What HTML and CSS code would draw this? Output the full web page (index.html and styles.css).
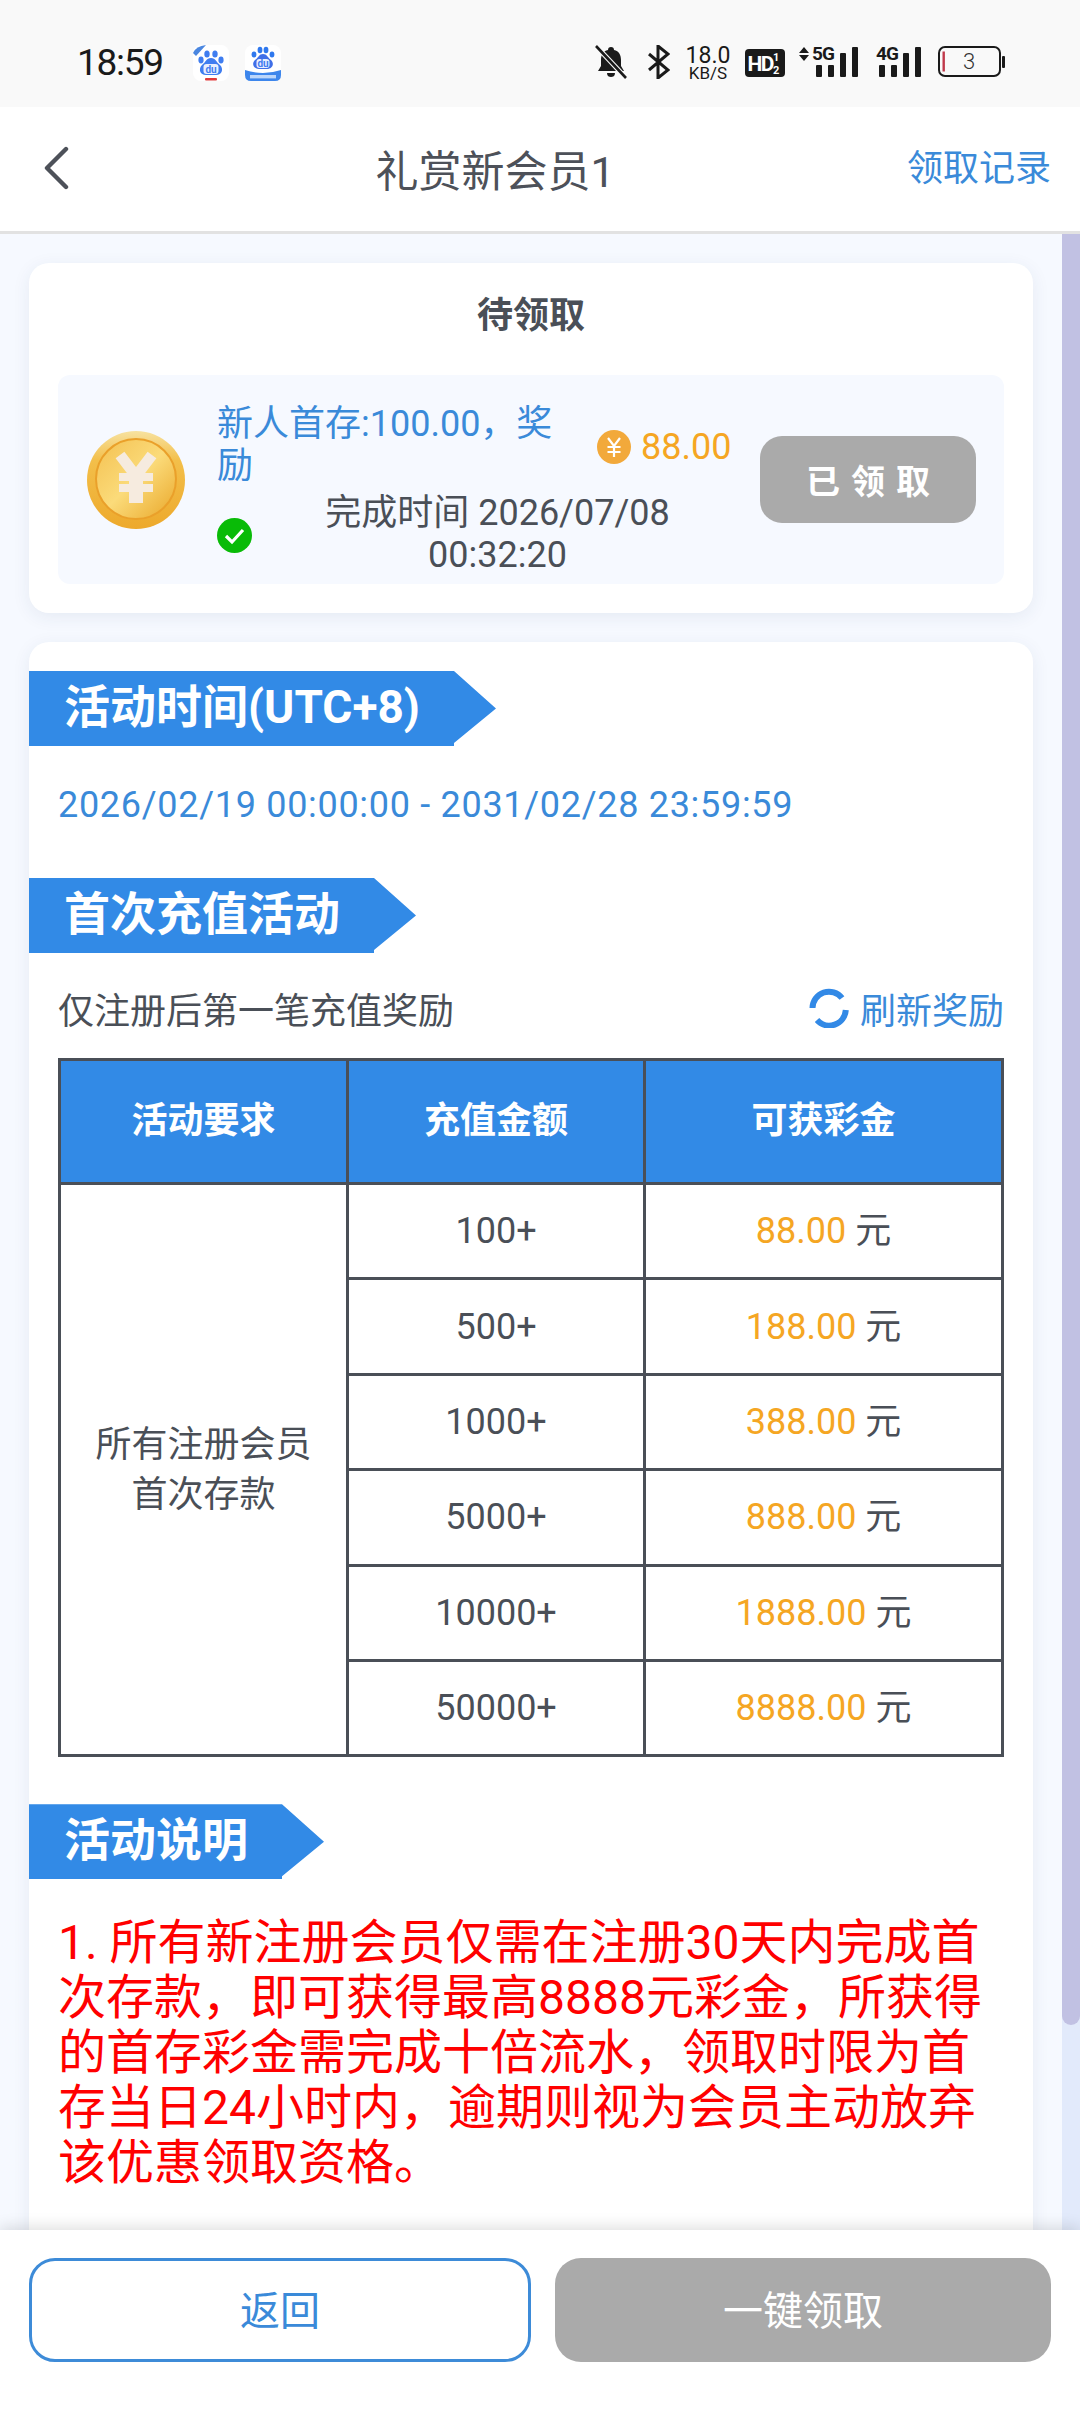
FILE: index.html
```html
<!DOCTYPE html>
<html lang="zh-CN">
<head>
<meta charset="utf-8">
<title>礼赏新会员1</title>
<link rel="stylesheet" href="styles.css">
</head>
<body>
<div class="app">
  <header class="status">
    <div class="status-left">
      <span class="clock">18:59</span>
      <svg class="app-ico" viewBox="0 0 36 36">
        <rect width="36" height="36" rx="8" fill="#fff"/>
        <path d="M0 8 Q3 1 13 0 L3 11Z" fill="#4a86e0"/>
        <ellipse cx="8" cy="15" rx="2.6" ry="3.4" fill="#3f7df0"/><ellipse cx="14" cy="9" rx="2.7" ry="3.6" fill="#3f7df0"/>
        <ellipse cx="22" cy="9" rx="2.7" ry="3.6" fill="#3f7df0"/><ellipse cx="28" cy="15" rx="2.6" ry="3.4" fill="#3f7df0"/>
        <path d="M18 13 C23 13 23 17 27 20 C31 24 29 30 23 30 L13 30 C7 30 5 24 9 20 C13 17 13 13 18 13Z" fill="#3f7df0"/>
        <rect x="10.500" y="19" width="15" height="10" rx="3" fill="#e8effd"/>
        <text x="18" y="27.500" class="du">du</text>
        <rect x="12" y="33" width="12" height="2.400" rx="1" fill="#e03a3a"/>
      </svg>
      <svg class="app-ico" viewBox="0 0 36 36">
        <rect width="36" height="36" rx="8" fill="#fff"/>
        <ellipse cx="9" cy="9.500" rx="2.400" ry="3" fill="#2f78ee"/><ellipse cx="15" cy="5" rx="2.400" ry="3.200" fill="#2f78ee"/>
        <ellipse cx="21" cy="5" rx="2.400" ry="3.200" fill="#2f78ee"/><ellipse cx="27" cy="9.500" rx="2.400" ry="3" fill="#2f78ee"/>
        <path d="M18 9 C22 9 22 12 26 15 C30 19 27 24 22 24 L14 24 C9 24 6 19 10 15 C14 12 14 9 18 9Z" fill="#3f6fe8"/>
        <rect x="11.500" y="14" width="13" height="9" rx="3" fill="#e8effd"/>
        <text x="18" y="21.500" class="du">du</text>
        <path d="M0 25 Q18 31 36 25 L36 30 Q36 36 30 36 L6 36 Q0 36 0 30Z" fill="#3d86ec"/>
        <rect x="5" y="30" width="26" height="3.400" fill="#bcd6fa"/>
      </svg>
    </div>
    <div class="status-right">
      <svg class="ico-bell" viewBox="0 0 32 34">
        <path d="M16 2 C18 2 19 3 19 5 C24 6 26 10 26 15 L26 21 L29 26 L3 26 L6 21 L6 15 C6 10 8 6 13 5 C13 3 14 2 16 2Z M12 28 L20 28 C20 31 18 32 16 32 C14 32 12 31 12 28Z" fill="#1a1a1a"/>
        <path d="M1 1 L31 33" stroke="#f9f9f9" stroke-width="5"/>
        <path d="M1 1 L31 33" stroke="#1a1a1a" stroke-width="2.600"/>
      </svg>
      <svg class="ico-bt" viewBox="0 0 22 34">
        <path d="M1 9 L20 25 L10 33 L10 1 L20 9 L1 25" fill="none" stroke="#1a1a1a" stroke-width="3"/>
      </svg>
      <div class="speed"><span class="speed-num">18.0</span><span class="speed-unit">KB/S</span></div>
      <svg class="ico-hd" viewBox="0 0 40 28">
        <rect width="40" height="28" rx="4" fill="#1a1a1a"/>
        <text x="2.500" y="21.500" class="hd-txt">HD</text>
        <text x="28" y="12" class="hd-sub">1</text>
        <text x="28" y="25" class="hd-sub">2</text>
      </svg>
      <svg class="ico-sig" viewBox="0 -6 60 40">
        <path d="M5 2 L10 8 L0 8Z M5 16 L10 10 L0 10Z" fill="#1a1a1a"/>
        <text x="13" y="15" class="sig-txt">5G</text>
        <rect x="17" y="20" width="6" height="12" rx="1" fill="#1a1a1a"/><rect x="29" y="20" width="6" height="12" rx="1" fill="#1a1a1a"/>
        <rect x="41" y="8" width="6" height="24" rx="1" fill="#1a1a1a"/><rect x="53" y="2" width="6" height="30" rx="1" fill="#1a1a1a"/>
      </svg>
      <svg class="ico-sig4" viewBox="0 -6 46 40">
        <text x="0" y="15" class="sig-txt">4G</text>
        <rect x="3" y="20" width="6" height="12" rx="1" fill="#1a1a1a"/><rect x="15" y="20" width="6" height="12" rx="1" fill="#1a1a1a"/>
        <rect x="27" y="8" width="6" height="24" rx="1" fill="#1a1a1a"/><rect x="39" y="2" width="6" height="30" rx="1" fill="#1a1a1a"/>
      </svg>
      <svg class="ico-bat" viewBox="0 0 67 32">
        <rect x="1" y="1" width="61" height="29" rx="6" fill="none" stroke="#1a1a1a" stroke-width="2"/>
        <rect x="4.500" y="5.500" width="2.400" height="20" fill="#c0394b"/>
        <rect x="64" y="10" width="3" height="12" rx="1" fill="#1a1a1a"/>
        <text x="31" y="23" class="bat-txt">3</text>
      </svg>
    </div>
  </header>

  <nav class="nav">
    <svg class="back" viewBox="0 0 26 44"><path d="M23 3 L4 22 L23 41" fill="none" stroke="#4d5159" stroke-width="4.400" stroke-linecap="round" stroke-linejoin="round"/></svg>
    <h1 class="nav-title">礼赏新会员1</h1>
    <a class="nav-link">领取记录</a>
  </nav>

  <div class="body">
    <main class="scroll">
      <section class="card card-pending">
        <h2 class="pending-title">待领取</h2>
        <div class="reward">
          <svg class="coin" viewBox="0 0 98 100">
            <defs>
              <linearGradient id="coinEdge" x1="0" y1="0" x2="0" y2="1"><stop offset="0" stop-color="#f7e2a0"/><stop offset=".3" stop-color="#f3bf4a"/><stop offset="1" stop-color="#eda92c"/></linearGradient>
              <linearGradient id="coinFace" x1="0" y1="0" x2="1" y2="1"><stop offset="0" stop-color="#f3c050"/><stop offset=".5" stop-color="#fbdb7a"/><stop offset="1" stop-color="#e9a628"/></linearGradient>
            </defs>
            <circle cx="49" cy="50" r="49" fill="url(#coinEdge)"/>
            <circle cx="49" cy="49" r="40" fill="url(#coinFace)" stroke="#eaa02a" stroke-width="2"/>
            <g stroke="#f6ebdf" fill="none">
              <path d="M33 25 L49 46 L65 25" stroke-width="11"/>
              <path d="M49 44 L49 73" stroke-width="14"/>
              <path d="M32 47 L66 47 M32 58 L66 58" stroke-width="8"/>
            </g>
          </svg>
          <div class="reward-main">
            <div class="reward-top">
              <p class="reward-name">新人首存:100.00，奖励</p>
              <div class="reward-amt">
                <svg class="yen" viewBox="0 0 34 34">
                  <circle cx="17" cy="17" r="17" fill="#f2a93b"/>
                  <path d="M11 8 L17 16 L23 8 M17 16 L17 27 M10.500 17 L23.500 17 M10.500 22 L23.500 22" fill="none" stroke="#fff" stroke-width="2.200"/>
                </svg>
                <span class="amt-val">88.00</span>
              </div>
            </div>
            <div class="reward-done">
              <svg class="check" viewBox="0 0 35 35">
                <circle cx="17.500" cy="17.500" r="17.500" fill="#09bb07"/>
                <path d="M9 18 L15 24 L26 12" fill="none" stroke="#fff" stroke-width="3.200"/>
              </svg>
              <p class="done-time">完成时间 2026/07/08 00:32:20</p>
            </div>
          </div>
          <button class="claimed">已领取</button>
        </div>
      </section>

      <section class="card card-info">
        <h3 class="ribbon">活动时间(UTC+8)</h3>
        <p class="period">2026/02/19 00:00:00 - 2031/02/28 23:59:59</p>
        <h3 class="ribbon ribbon-two">首次充值活动</h3>
        <div class="sub-row">
          <span class="sub-text">仅注册后第一笔充值奖励</span>
          <span class="refresh">
            <svg class="refresh-ico" viewBox="0 0 40 40">
              <path d="M3.500 20 A16.500 16.500 0 0 1 33 10" fill="none" stroke="#3289e6" stroke-width="6"/>
              <path d="M36.800 22 A16.500 16.500 0 0 1 8 32" fill="none" stroke="#3289e6" stroke-width="6"/>
            </svg>
            刷新奖励
          </span>
        </div>
        <table class="rules">
          <colgroup><col class="c1"><col class="c2"><col class="c3"></colgroup>
          <thead>
            <tr><th>活动要求</th><th>充值金额</th><th>可获彩金</th></tr>
          </thead>
          <tbody>
            <tr><td rowspan="6" class="who">所有注册会员<br>首次存款</td><td>100+</td><td><span class="gold">88.00</span> 元</td></tr>
            <tr><td>500+</td><td><span class="gold">188.00</span> 元</td></tr>
            <tr><td>1000+</td><td><span class="gold">388.00</span> 元</td></tr>
            <tr><td>5000+</td><td><span class="gold">888.00</span> 元</td></tr>
            <tr><td>10000+</td><td><span class="gold">1888.00</span> 元</td></tr>
            <tr><td>50000+</td><td><span class="gold">8888.00</span> 元</td></tr>
          </tbody>
        </table>
        <h3 class="ribbon ribbon-three">活动说明</h3>
        <p class="notice">1. 所有新注册会员仅需在注册30天内完成首次存款，即可获得最高8888元彩金，所获得的首存彩金需完成十倍流水，领取时限为首存当日24小时内，逾期则视为会员主动放弃该优惠领取资格。</p>
      </section>
    </main>
    <div class="track"><div class="thumb"></div></div>
  </div>

  <footer class="footer">
    <button class="btn btn-back">返回</button>
    <button class="btn btn-claim">一键领取</button>
  </footer>
</div>
</body>
</html>
```

FILE: styles.css
```css
* { box-sizing: border-box; margin: 0; padding: 0; }
html, body { width: 1080px; height: 2412px; overflow: hidden; }
body { font-family: Roboto, "Noto Sans CJK SC", sans-serif; color: #4a4f57; background: #fff; }
.app { width: 1080px; height: 2412px; display: flex; flex-direction: column; overflow: hidden; }

/* status bar */
.status { height: 107px; flex: none; background: #f9f9f9; display: flex; justify-content: space-between; padding: 45px 75px 0 77px; align-items: flex-start; }
.status-left { display: flex; align-items: center; height: 36px; }
.clock { font-size: 37px; letter-spacing: -1.300px; color: #1a1a1a; width: 116px; line-height: 40px; }
.app-ico { width: 36px; height: 36px; margin-right: 16px; }
.du { font: 700 10px Roboto, sans-serif; fill: #3f7df0; text-anchor: middle; }
.status-right { display: flex; align-items: flex-start; height: 36px; }
.ico-bell { width: 32px; height: 34px; margin-right: 21px; }
.ico-bt { width: 22px; height: 34px; margin-right: 15px; }
.speed { display: flex; flex-direction: column; align-items: center; width: 46px; margin-right: 14px; color: #1a1a1a; }
.speed-num { font-size: 23px; line-height: 21px; }
.speed-unit { font-size: 17px; line-height: 15px; }
.ico-hd { width: 40px; height: 28px; margin: 4px 14px 0 0; }
.hd-txt { font: 700 21px Roboto, sans-serif; fill: #fff; letter-spacing: -1.500px; }
.hd-sub { font: 700 11px Roboto, sans-serif; fill: #fff; }
.ico-sig { width: 60px; height: 40px; margin: -6px 17px 0 0; }
.ico-sig4 { width: 46px; height: 40px; margin: -6px 16px 0 0; }
.sig-txt { font: 700 19px Roboto, sans-serif; fill: #1a1a1a; letter-spacing: -1px; }
.ico-bat { width: 67px; height: 32px; margin-top: 1px; }
.bat-txt { font: 300 22px Roboto, sans-serif; fill: #333; text-anchor: middle; }

/* nav */
.nav { height: 127px; flex: none; background: #fff; border-bottom: 3px solid #e2e2e2; display: flex; align-items: center; justify-content: space-between; padding: 0 29px 3px 43px; }
.back { width: 26px; height: 44px; }
.nav-title { font-size: 43px; font-weight: 400; color: #4d5159; margin-left: 14px; }
.nav-link { font-size: 36px; color: #3a8ad9; padding-bottom: 5px; }

/* scroll region */
.body { flex: 1; min-height: 0; display: flex; background: #f6f9ff; }
.scroll { flex: 1; min-width: 0; padding: 29px 29px 0; display: flex; flex-direction: column; gap: 29px; overflow: hidden; }
.track { width: 18px; flex: none; background: #e2eafb; }
.thumb { height: 1791px; background: #c1c1e3; border-radius: 0 0 9px 9px; }
.card { background: #fff; border-radius: 20px; box-shadow: 0 4px 18px rgba(40, 60, 100, .08); flex: none; }

/* pending card */
.card-pending { height: 350px; padding: 0 29px; }
.pending-title { height: 112px; display: flex; align-items: center; justify-content: center; font-size: 36px; font-weight: 700; color: #4a4f57; padding-bottom: 14px; }
.reward { height: 209px; background: #f6f9ff; border-radius: 12px; display: flex; align-items: center; padding: 0 28px 0 29px; }
.coin { width: 98px; height: 100px; flex: none; margin-right: 32px; }
.reward-main { width: 528px; flex: none; margin-right: 15px; font-size: 36px; line-height: 42px; padding-top: 20px; }
.reward-top { display: flex; align-items: center; }
.reward-name { width: 362px; flex: none; color: #3a8ad9; margin-right: 18px; }
.reward-amt { display: flex; align-items: center; gap: 10px; color: #f5a623; margin-top: 3px; }
.yen { width: 34px; height: 34px; }
.reward-done { display: flex; align-items: center; margin-top: 5px; }
.check { width: 35px; height: 35px; flex: none; margin-top: 2px; }
.done-time { flex: 1; text-align: center; padding: 0 6px 0 4px; }
.claimed { width: 216px; height: 87px; flex: none; border: 0; border-radius: 22px; background: #aaa; color: #fff; font: 700 34px Roboto, "Noto Sans CJK SC", sans-serif; letter-spacing: 11px; padding-left: 11px; }

/* info card */
.card-info { padding: 29px 0 100px; }
.ribbon { display: block; width: fit-content; height: 75px; line-height: 73px; padding: 0 76px 0 35px; background: #328ae6; color: #fff; font-size: 46px; font-weight: 700; white-space: nowrap; clip-path: polygon(0 0, calc(100% - 42px) 0, 100% 50%, calc(100% - 42px) calc(100% - 3px), calc(100% - 42px) 100%, 0 100%); }
.period { font-size: 36px; letter-spacing: .7px; color: #3a8ad9; margin: 0 29px; height: 132px; line-height: 118px; white-space: nowrap; }
.sub-row { margin: 0 29px; height: 105px; padding-top: 5px; display: flex; justify-content: space-between; align-items: center; font-size: 36px; }
.refresh { display: flex; align-items: center; gap: 11px; color: #3a8ad9; }
.refresh-ico { width: 40px; height: 40px; }
.rules { width: 943px; margin: 0 29px; border-collapse: collapse; table-layout: fixed; font-size: 36px; line-height: 42px; text-align: center; }
.c1 { width: 288px; }
.c2 { width: 297px; }
.c3 { width: 358px; }
.rules th, .rules td { border: 3px solid #4a4f57; }
.rules th { height: 124px; background: #328ae6; color: #fff; font-weight: 700; padding-bottom: 2px; }
.rules td { height: 95.400px; }
.rules .who { line-height: 50px; }
.gold { color: #f5a623; }
.ribbon-three { margin-top: 47px; }
.notice { margin: 36px 29px 0; font-size: 48px; line-height: 55px; color: #f00; }

/* footer */
.footer { height: 182px; flex: none; background: #fff; position: relative; box-shadow: 0 -3px 14px rgba(0, 0, 0, .13); display: flex; padding: 28px 29px 0; gap: 24px; align-items: flex-start; }
.btn { height: 104px; border-radius: 26px; font: 400 40px Roboto, "Noto Sans CJK SC", sans-serif; padding-bottom: 5px; }
.btn-back { width: 502px; background: #fff; border: 3px solid #3d8bd8; color: #3a8ad9; }
.btn-claim { width: 496px; background: #aaa; border: 0; color: #fff; }
```
